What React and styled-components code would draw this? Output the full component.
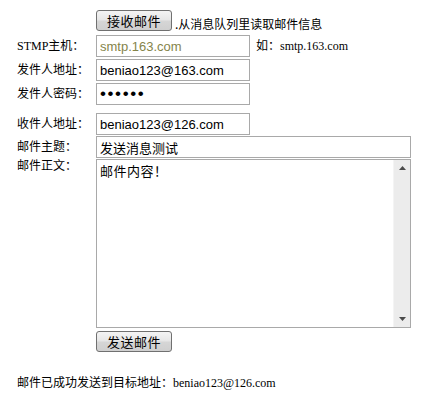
import React from 'react';
import styled, { createGlobalStyle } from 'styled-components';

const Global = createGlobalStyle`
  html, body { margin: 0; padding: 0; background: #fff; }
  body {
    font-family: "Liberation Serif", "Noto Sans CJK SC", serif;
    font-size: 12px;
    color: #000;
  }
`;

const Page = styled.div`
  padding: 10px 0 20px 17px;
  display: flex;
  flex-direction: column;
`;

const Row = styled.div`
  display: flex;
  align-items: ${(p) => p.$align || 'center'};
  margin-top: ${(p) => p.$mt || 0}px;
`;

const Label = styled.div`
  width: 79px;
  flex: none;
  font-size: 12px;
  line-height: 14px;
  white-space: nowrap;
  padding-top: ${(p) => p.$pt || 0}px;
`;

const Button = styled.button`
  box-sizing: border-box;
  width: 76px;
  height: 21px;
  padding: 0;
  margin: 0;
  border: 1px solid #707070;
  border-radius: 3px;
  background: linear-gradient(#f4f4f4, #e6e6e6 48%, #d6d6d6 52%, #cfcfcf);
  font-family: "Noto Sans CJK SC", sans-serif;
  font-size: 13px;
  line-height: 19px;
  color: #000;
  letter-spacing: 0.5px;
`;

const Note = styled.span`
  font-family: "Noto Sans CJK SC", sans-serif;
  font-size: 12px;
  line-height: 14px;
  margin-left: 3px;
`;

const TextInput = styled.input`
  box-sizing: border-box;
  width: ${(p) => p.$w}px;
  height: 22px;
  margin: 0;
  border: 1px solid #a9a9a9;
  padding: 0 3px;
  font-family: "Liberation Sans", "Noto Sans CJK SC", sans-serif;
  font-size: ${(p) => (p.$secret ? '17px' : '13px')};
  color: ${(p) => (p.$muted ? '#85844a' : '#000')};
  letter-spacing: ${(p) => (p.$secret ? '1.6px' : 'normal')};
  background: #fff;
  outline: none;
`;

const Hint = styled.span`
  margin-left: 6px;
  font-size: 12px;
  line-height: 14px;
`;

const EditorBox = styled.div`
  box-sizing: border-box;
  width: 315px;
  height: 169px;
  border: 1px solid #a9a9a9;
  display: flex;
  background: #fff;
`;

const Editor = styled.textarea`
  flex: 1;
  border: 0;
  margin: 0;
  padding: 3px 3px;
  resize: none;
  outline: none;
  overflow: hidden;
  font-family: "Noto Sans CJK SC", sans-serif;
  font-size: 13px;
  line-height: 16px;
  letter-spacing: 0.5px;
  color: #000;
`;

const ScrollTrack = styled.div`
  width: 16px;
  flex: none;
  background: #ececec;
  border-left: 1px solid #f4f4f4;
  display: flex;
  flex-direction: column;
  justify-content: space-between;
  align-items: center;
  padding: 6px 0;
`;

const Status = styled.div`
  margin-top: 24px;
  font-size: 12px;
  line-height: 14px;
`;

const Arrow = ({ down }) => (
  <svg width="7" height="4" viewBox="0 0 7 4">
    <polygon points={down ? '0,0 7,0 3.5,4' : '3.5,0 7,4 0,4'} fill="#4a4a4a" />
  </svg>
);

export default function App() {
  return (
    <>
      <Global />
      <Page>
        <Row $align="flex-end">
          <Label />
          <Button>接收邮件</Button>
          <Note>.从消息队列里读取邮件信息</Note>
        </Row>
        <Row $mt={4}>
          <Label>STMP主机：</Label>
          <TextInput $w={154} $muted defaultValue="smtp.163.com" />
          <Hint>如：smtp.163.com</Hint>
        </Row>
        <Row $mt={2}>
          <Label>发件人地址：</Label>
          <TextInput $w={154} defaultValue="beniao123@163.com" />
        </Row>
        <Row $mt={2}>
          <Label>发件人密码：</Label>
          <TextInput $w={154} $secret type="password" defaultValue="123456" />
        </Row>
        <Row $mt={8}>
          <Label>收件人地址：</Label>
          <TextInput $w={154} defaultValue="beniao123@126.com" />
        </Row>
        <Row $mt={1}>
          <Label>邮件主题：</Label>
          <TextInput $w={315} defaultValue="发送消息测试" />
        </Row>
        <Row $mt={1} $align="flex-start">
          <Label $pt={0}>邮件正文：</Label>
          <EditorBox>
            <Editor defaultValue="邮件内容！" />
            <ScrollTrack>
              <Arrow />
              <Arrow down />
            </ScrollTrack>
          </EditorBox>
        </Row>
        <Row $mt={3}>
          <Label />
          <Button>发送邮件</Button>
        </Row>
        <Status>邮件已成功发送到目标地址：beniao123@126.com</Status>
      </Page>
    </>
  );
}
